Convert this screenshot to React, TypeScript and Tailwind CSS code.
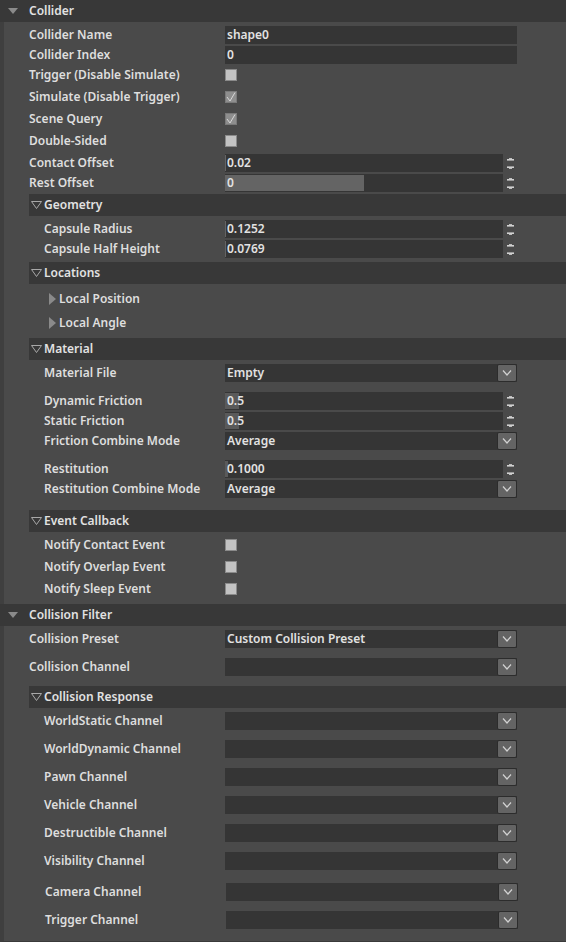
import React from "react";

const FONT = { fontFamily: '"Noto Sans", "Open Sans", sans-serif' };

function TopHeader({ title, cls = "" }: { title: string; cls?: string }) {
  return (
    <div className={`h-[22px] bg-[#383838] flex items-center ${cls}`}>
      <div className="w-[29px] shrink-0 flex items-center pl-[8px]">
        <svg width="10" height="6" viewBox="0 0 10 6">
          <polygon points="0,0 10,0 5,6" fill="#8a8a8a" />
        </svg>
      </div>
      <span className="text-[12px] font-semibold text-[#e2e2e2] leading-none">{title}</span>
    </div>
  );
}

function SubHeader({ title, cls = "" }: { title: string; cls?: string }) {
  return (
    <div className={`h-[22px] ml-[25px] bg-[#383838] flex items-center ${cls}`}>
      <div className="w-[15px] shrink-0 flex items-center pl-[2px]">
        <svg width="11" height="8" viewBox="0 0 11 8">
          <polygon points="0.5,0.5 10.5,0.5 5.5,7.5" fill="none" stroke="#a8a8a8" strokeWidth="1" />
        </svg>
      </div>
      <span className="text-[12px] font-semibold text-[#e2e2e2] leading-none">{title}</span>
    </div>
  );
}

function Row({
  label,
  sub = false,
  cls = "",
  children,
}: {
  label: string;
  sub?: boolean;
  cls?: string;
  children?: React.ReactNode;
}) {
  return (
    <div className={`flex items-center ${cls}`}>
      <div
        className={`w-[221px] shrink-0 ${sub ? "pl-[40px]" : "pl-[25px]"} text-[12px] font-semibold text-[#dedede] leading-none whitespace-nowrap`}
      >
        {label}
      </div>
      {children}
    </div>
  );
}

function TextBox({ value }: { value: string }) {
  return (
    <div className="w-[292px] h-[18px] bg-[#353535] flex items-center pl-[2px] text-[12px] font-semibold text-[#e2e2e2] leading-none">
      {value}
    </div>
  );
}

function UpArrow() {
  return (
    <svg width="7" height="3" viewBox="0 0 7 3">
      <rect x="2" y="0" width="3" height="1" fill="#bdbdbd" />
      <rect x="0" y="1" width="7" height="1.6" fill="#d0d0d0" />
    </svg>
  );
}

function DownArrow() {
  return (
    <svg width="7" height="3" viewBox="0 0 7 3">
      <rect x="0" y="0.4" width="7" height="1.6" fill="#d0d0d0" />
      <rect x="2" y="2" width="3" height="1" fill="#bdbdbd" />
    </svg>
  );
}

function SpinBox({ value, fill = 0, fillColor = "bg-[#5a5a5a]" }: { value: string; fill?: number; fillColor?: string }) {
  return (
    <div className="flex items-center">
      <div className="relative w-[278px] h-[18px] bg-[#353535] flex items-center">
        {fill > 0 && (
          <div className={`absolute left-0 top-[1px] bottom-[1px] ${fillColor}`} style={{ width: fill }} />
        )}
        <span className="relative pl-[2px] text-[12px] font-semibold text-[#e2e2e2] leading-none">{value}</span>
      </div>
      <div className="w-[14px] h-[18px] flex flex-col items-center justify-center gap-[5px] pl-[1px]">
        <UpArrow />
        <DownArrow />
      </div>
    </div>
  );
}

function Dropdown({ value = "" }: { value?: string }) {
  return (
    <div className="w-[292px] h-[18px] bg-[#353535] flex items-center justify-between">
      <span className="pl-[2px] text-[12px] font-semibold text-[#e2e2e2] leading-none">{value}</span>
      <div className="w-[20px] h-[18px] bg-[#646464] border border-[#2c2c2c] rounded-[2px] flex items-center justify-center">
        <svg width="10" height="6" viewBox="0 0 10 6">
          <polyline points="1,0.5 5,5 9,0.5" fill="none" stroke="#d2d2d2" strokeWidth="1.2" />
        </svg>
      </div>
    </div>
  );
}

function CheckBox({ checked = false }: { checked?: boolean }) {
  if (checked) {
    return (
      <div className="w-[12px] h-[12px] bg-[#8e8e8e] border border-[#7a7a7a] flex items-center justify-center">
        <svg width="10" height="10" viewBox="0 0 10 10">
          <polyline points="1,5 4,9 9,0.5" fill="none" stroke="#d8d8d8" strokeWidth="1" />
        </svg>
      </div>
    );
  }
  return <div className="w-[12px] h-[12px] bg-[#c3c3c3] border border-[#8a8a8a]" />;
}

function LeafRow({ label, cls = "" }: { label: string; cls?: string }) {
  return (
    <div className={`h-[24px] flex items-center pl-[45px] ${cls}`}>
      <svg width="8" height="12" viewBox="0 0 8 12">
        <polygon points="0,0 7,6 0,12" fill="#8a8a8a" />
      </svg>
      <span className="ml-[2px] text-[12px] font-semibold text-[#dedede] leading-none">{label}</span>
    </div>
  );
}

export default function App() {
  return (
    <div className="w-[566px] h-[942px] bg-[#4a4a4a] overflow-hidden flex flex-col" style={FONT}>
      <TopHeader title="Collider" />
      <div className="border-l-[4px] border-[#3f3f3f] flex flex-col pt-[4px]">
        <Row label="Collider Name" cls="h-[18px]">
          <TextBox value="shape0" />
        </Row>
        <Row label="Collider Index" cls="h-[18px] mt-[2px]">
          <TextBox value="0" />
        </Row>
        <Row label="Trigger (Disable Simulate)" cls="h-[22px]">
          <CheckBox />
        </Row>
        <Row label="Simulate (Disable Trigger)" cls="h-[22px]">
          <CheckBox checked />
        </Row>
        <Row label="Scene Query" cls="h-[22px]">
          <CheckBox checked />
        </Row>
        <Row label="Double-Sided" cls="h-[22px]">
          <CheckBox />
        </Row>
        <Row label="Contact Offset" cls="h-[18px] mt-[2px]">
          <SpinBox value="0.02" fill={1} fillColor="bg-[#646464]" />
        </Row>
        <Row label="Rest Offset" cls="h-[18px] mt-[2px]">
          <SpinBox value="0" fill={139} fillColor="bg-[#646464]" />
        </Row>

        <SubHeader title="Geometry" cls="mt-[2px]" />
        <Row label="Capsule Radius" sub cls="h-[18px] mt-[4px]">
          <SpinBox value="0.1252" fill={1} fillColor="bg-[#646464]" />
        </Row>
        <Row label="Capsule Half Height" sub cls="h-[18px] mt-[2px]">
          <SpinBox value="0.0769" fill={1} fillColor="bg-[#646464]" />
        </Row>

        <SubHeader title="Locations" cls="mt-[4px]" />
        <LeafRow label="Local Position" cls="mt-[3px]" />
        <LeafRow label="Local Angle" cls="mb-[-1px]" />

        <SubHeader title="Material" cls="mt-[4px]" />
        <Row label="Material File" sub cls="h-[18px] mt-[4px]">
          <Dropdown value="Empty" />
        </Row>
        <Row label="Dynamic Friction" sub cls="h-[18px] mt-[10px]">
          <SpinBox value="0.5" fill={14} />
        </Row>
        <Row label="Static Friction" sub cls="h-[18px] mt-[2px]">
          <SpinBox value="0.5" fill={14} />
        </Row>
        <Row label="Friction Combine Mode" sub cls="h-[18px] mt-[2px]">
          <Dropdown value="Average" />
        </Row>
        <Row label="Restitution" sub cls="h-[18px] mt-[10px]">
          <SpinBox value="0.1000" fill={3} />
        </Row>
        <Row label="Restitution Combine Mode" sub cls="h-[18px] mt-[2px]">
          <Dropdown value="Average" />
        </Row>

        <SubHeader title="Event Callback" cls="mt-[12px]" />
        <Row label="Notify Contact Event" sub cls="h-[22px] mt-[2px]">
          <CheckBox />
        </Row>
        <Row label="Notify Overlap Event" sub cls="h-[22px]">
          <CheckBox />
        </Row>
        <Row label="Notify Sleep Event" sub cls="h-[22px] mb-[4px]">
          <CheckBox />
        </Row>
      </div>

      <TopHeader title="Collision Filter" />
      <div className="flex-1 border-l-[4px] border-[#3f3f3f] flex flex-col pt-[4px] border-b border-b-[#3a3a3a]">
        <Row label="Collision Preset" cls="h-[18px]">
          <Dropdown value="Custom Collision Preset" />
        </Row>
        <Row label="Collision Channel" cls="h-[18px] mt-[10px]">
          <Dropdown />
        </Row>

        <SubHeader title="Collision Response" cls="mt-[10px]" />
        <Row label="WorldStatic Channel" sub cls="h-[18px] mt-[4px]">
          <Dropdown />
        </Row>
        <Row label="WorldDynamic Channel" sub cls="h-[18px] mt-[10px]">
          <Dropdown />
        </Row>
        <Row label="Pawn Channel" sub cls="h-[18px] mt-[10px]">
          <Dropdown />
        </Row>
        <Row label="Vehicle Channel" sub cls="h-[18px] mt-[10px]">
          <Dropdown />
        </Row>
        <Row label="Destructible Channel" sub cls="h-[18px] mt-[10px]">
          <Dropdown />
        </Row>
        <Row label="Visibility Channel" sub cls="h-[18px] mt-[10px]">
          <Dropdown />
        </Row>
        <Row label="Camera Channel" sub cls="h-[18px] mt-[13px] ml-[1px]">
          <Dropdown />
        </Row>
        <Row label="Trigger Channel" sub cls="h-[18px] mt-[10px] ml-[1px]">
          <Dropdown />
        </Row>
      </div>
    </div>
  );
}
